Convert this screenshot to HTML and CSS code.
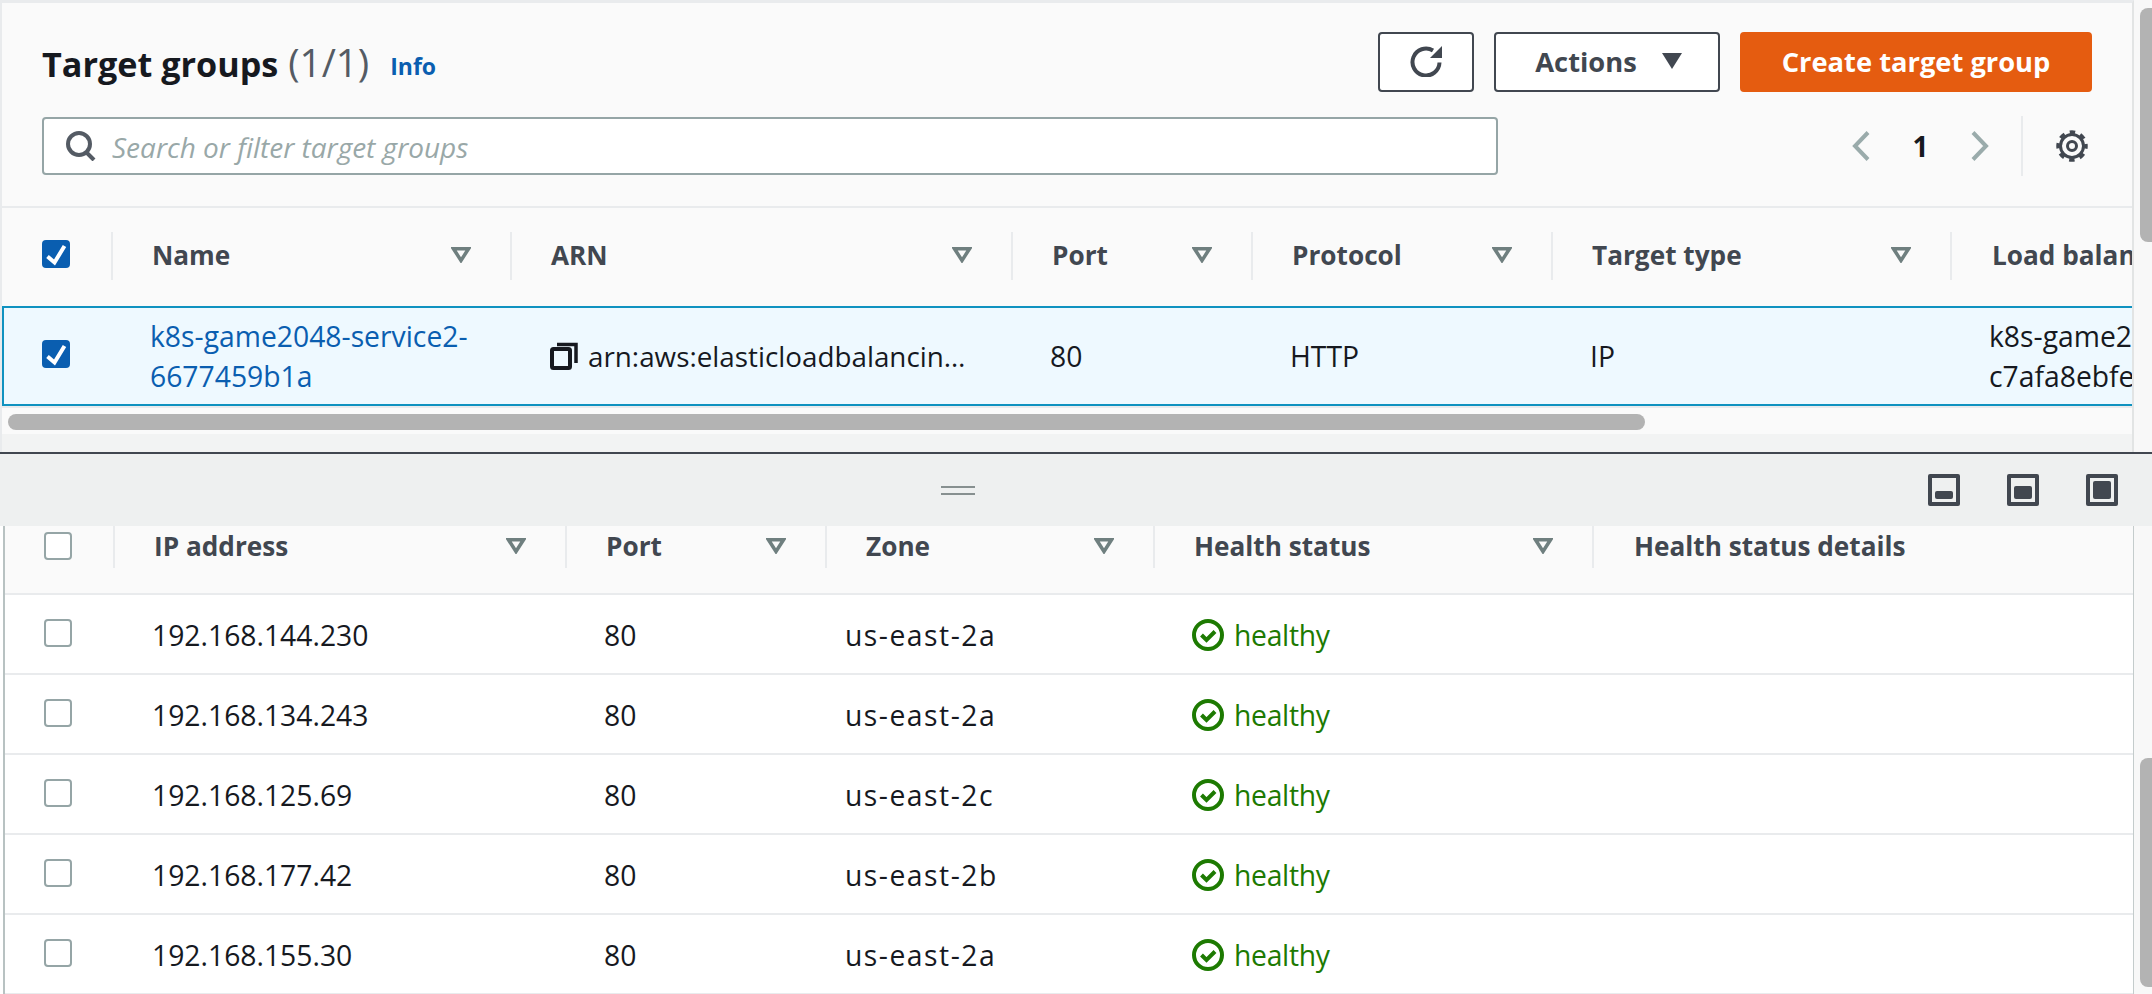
FILE: index.html
```html
<!DOCTYPE html>
<html lang="en">
<head>
    <meta charset="UTF-8">
    <title>Target groups</title>
    <link rel="stylesheet" href="styles.css">
</head>
<body>
    <svg class="sprite" width="0" height="0">
        <symbol id="caret" viewBox="0 0 20 16"><path d="M2.500 1.800h15L10 13.500z" fill="none" stroke="currentColor" stroke-width="3.500"/></symbol>
        <symbol id="check" viewBox="0 0 28 28"><path d="M5.500 16.500l7 6L22.500 6" fill="none" stroke="#fff" stroke-width="4"/></symbol>
        <symbol id="ok" viewBox="0 0 32 32"><circle cx="16" cy="16" r="14" fill="none" stroke="currentColor" stroke-width="4"/><path d="M9.500 16l5 5 8.500-8.500" fill="none" stroke="currentColor" stroke-width="4"/></symbol>
    </svg>

    <section class="top-pane">
        <div class="top-main">
            <header class="head">
                <div class="head-row">
                    <h1 class="title">Target groups <span class="count">(1/1)</span></h1>
                    <a class="info">Info</a>
                    <div class="actions">
                        <button class="btn btn-icon" aria-label="Refresh">
                            <svg width="32" height="32" viewBox="0 0 32 32"><path d="M29.500 17.500A13.500 13.500 0 1 1 23 5.500" fill="none" stroke="currentColor" stroke-width="4"/><path d="M32 1v12H20z" fill="currentColor"/></svg>
                        </button>
                        <button class="btn btn-actions">Actions
                            <svg width="20" height="16" viewBox="0 0 20 16"><path d="M0 0h20L10 16z" fill="currentColor"/></svg>
                        </button>
                        <button class="btn btn-primary">Create target group</button>
                    </div>
                </div>
                <div class="head-row search-row">
                    <label class="search">
                        <svg width="30" height="30" viewBox="0 0 30 30"><circle cx="13" cy="13" r="11" fill="none" stroke="currentColor" stroke-width="4"/><path d="M20 21l8 8" fill="none" stroke="currentColor" stroke-width="4"/></svg>
                        <input type="text" placeholder="Search or filter target groups">
                    </label>
                    <div class="pager">
                        <svg class="chev" width="18" height="30" viewBox="0 0 18 30"><path d="M16 1.500L3 15l13 13.500" fill="none" stroke="currentColor" stroke-width="4"/></svg>
                        <span class="page-num">1</span>
                        <svg class="chev" width="18" height="30" viewBox="0 0 18 30"><path d="M2 1.500L15 15 2 28.500" fill="none" stroke="currentColor" stroke-width="4"/></svg>
                        <span class="pager-sep"></span>
                        <svg class="gear" width="32" height="32" viewBox="0 0 32 32">
                            <circle cx="16" cy="16" r="11.500" fill="none" stroke="currentColor" stroke-width="3"/>
                            <circle cx="16" cy="16" r="14" fill="none" stroke="currentColor" stroke-width="3.500" stroke-dasharray="5.500 5.500" stroke-dashoffset="2.750"/>
                            <circle cx="16" cy="16" r="4.500" fill="none" stroke="currentColor" stroke-width="3"/>
                        </svg>
                    </div>
                </div>
            </header>

            <div class="tg-head">
                <div class="cb-cell"><span class="cb on"><svg width="28" height="28"><use href="#check"/></svg></span></div>
                <div class="th">Name<svg class="caret"><use href="#caret"/></svg></div>
                <div class="th">ARN<svg class="caret"><use href="#caret"/></svg></div>
                <div class="th">Port<svg class="caret"><use href="#caret"/></svg></div>
                <div class="th">Protocol<svg class="caret"><use href="#caret"/></svg></div>
                <div class="th">Target type<svg class="caret"><use href="#caret"/></svg></div>
                <div class="th">Load balancer</div>
            </div>
            <div class="tg-row">
                <div class="cb-cell"><span class="cb on"><svg width="28" height="28"><use href="#check"/></svg></span></div>
                <div class="td"><a class="link">k8s-game2048-service2-<br>6677459b1a</a></div>
                <div class="td arn">
                    <svg width="28" height="28" viewBox="0 0 28 28"><rect x="2" y="7" width="18" height="19" rx="1.500" fill="none" stroke="currentColor" stroke-width="4"/><path d="M7 2.500h19V21" fill="none" stroke="currentColor" stroke-width="3.500"/></svg>
                    <span>arn:aws:elasticloadbalancin…</span>
                </div>
                <div class="td">80</div>
                <div class="td">HTTP</div>
                <div class="td">IP</div>
                <div class="td">k8s-game2<br>c7afa8ebfe</div>
            </div>
            <div class="hscroll"><div class="hthumb"></div></div>
            <div class="gutter"></div>
        </div>
        <div class="vscroll"><div class="vthumb vthumb-top"></div></div>
    </section>

    <div class="split-bar">
        <div class="handle"></div>
        <div class="split-icons">
            <svg width="32" height="32" viewBox="0 0 32 32"><rect width="32" height="32" rx="2" fill="currentColor"/><rect x="4" y="4" width="24" height="24" fill="#eef0f0"/><rect x="7" y="17" width="18" height="8" rx="2" fill="currentColor"/></svg>
            <svg width="32" height="32" viewBox="0 0 32 32"><rect width="32" height="32" rx="2" fill="currentColor"/><rect x="4" y="4" width="24" height="24" fill="#eef0f0"/><rect x="7" y="12" width="18" height="13" rx="2" fill="currentColor"/></svg>
            <svg width="32" height="32" viewBox="0 0 32 32"><rect width="32" height="32" rx="2" fill="currentColor"/><rect x="4" y="4" width="24" height="24" fill="#eef0f0"/><rect x="7" y="7" width="18" height="18" rx="2" fill="currentColor"/></svg>
        </div>
    </div>

    <section class="bottom-pane">
        <div class="bottom-main">
            <div class="ip-head">
                <div class="cb-cell"><span class="cb"></span></div>
                <div class="th">IP address<svg class="caret"><use href="#caret"/></svg></div>
                <div class="th">Port<svg class="caret"><use href="#caret"/></svg></div>
                <div class="th">Zone<svg class="caret"><use href="#caret"/></svg></div>
                <div class="th">Health status<svg class="caret"><use href="#caret"/></svg></div>
                <div class="th">Health status details</div>
            </div>
            <div class="ip-row">
                <div class="cb-cell"><span class="cb"></span></div>
                <div class="td">192.168.144.230</div>
                <div class="td">80</div>
                <div class="td zone">us-east-2a</div>
                <div class="td healthy"><svg width="32" height="32"><use href="#ok"/></svg>healthy</div>
                <div class="td"></div>
            </div>
            <div class="ip-row">
                <div class="cb-cell"><span class="cb"></span></div>
                <div class="td">192.168.134.243</div>
                <div class="td">80</div>
                <div class="td zone">us-east-2a</div>
                <div class="td healthy"><svg width="32" height="32"><use href="#ok"/></svg>healthy</div>
                <div class="td"></div>
            </div>
            <div class="ip-row">
                <div class="cb-cell"><span class="cb"></span></div>
                <div class="td">192.168.125.69</div>
                <div class="td">80</div>
                <div class="td zone">us-east-2c</div>
                <div class="td healthy"><svg width="32" height="32"><use href="#ok"/></svg>healthy</div>
                <div class="td"></div>
            </div>
            <div class="ip-row">
                <div class="cb-cell"><span class="cb"></span></div>
                <div class="td">192.168.177.42</div>
                <div class="td">80</div>
                <div class="td zone">us-east-2b</div>
                <div class="td healthy"><svg width="32" height="32"><use href="#ok"/></svg>healthy</div>
                <div class="td"></div>
            </div>
            <div class="ip-row">
                <div class="cb-cell"><span class="cb"></span></div>
                <div class="td">192.168.155.30</div>
                <div class="td">80</div>
                <div class="td zone">us-east-2a</div>
                <div class="td healthy"><svg width="32" height="32"><use href="#ok"/></svg>healthy</div>
                <div class="td"></div>
            </div>
        </div>
        <div class="vscroll"><div class="vthumb vthumb-bottom"></div></div>
    </section>
</body>
</html>
```

FILE: styles.css
```css
* {
    box-sizing: border-box;
}

body {
    margin: 0;
    height: 994px;
    overflow: hidden;
    background-color: #fff;
    color: #16191f;
    font-family: "Open Sans", sans-serif;
    font-size: 28.300px;
}

.sprite {
    position: absolute;
}

/* top pane */
.top-pane {
    display: flex;
    height: 454px;
    background-color: #f8f8f8;
    border-bottom: 2px solid #414750;
}

.top-main {
    width: 2134px;
    overflow: hidden;
    background-color: #fafafa;
    border-top: 3px solid #e9ebed;
    border-left: 2px solid #e9ebed;
    border-right: 2px solid #e2e4e4;
}

.vscroll {
    flex: 1;
    padding-left: 6px;
    background-color: #f8f8f8;
}

.vthumb {
    background-color: #b3b3b3;
    border-radius: 8px 0 0 8px;
}

.vthumb-top {
    height: 234px;
    margin-top: 8px;
}

.vthumb-bottom {
    height: 229px;
    margin-top: 232px;
}

.head {
    height: 205px;
    padding: 29px 40px 0 40px;
    border-bottom: 2px solid #e9ebed;
}

.head-row {
    display: flex;
    align-items: center;
    height: 60px;
}

.search-row {
    height: 60px;
    margin-top: 24px;
}

.title {
    margin: 0;
    font-size: 34.200px;
    font-weight: 700;
}

.count {
    margin-left: 1px;
    font-size: 38.600px;
    font-weight: 400;
    color: #545b64;
}

.info {
    margin-left: 21px;
    margin-top: 8px;
    color: #0a5eb0;
    font-size: 23px;
    font-weight: 700;
}

.actions {
    display: flex;
    gap: 20px;
    margin-left: auto;
}

.btn {
    display: flex;
    align-items: center;
    justify-content: center;
    height: 60px;
    padding: 0 0 2px;
    background-color: #fff;
    border: 2px solid #414750;
    border-radius: 4px;
    color: #414750;
    font-family: inherit;
    font-size: 27.300px;
    font-weight: 700;
}

.btn-icon {
    width: 96px;
}

.btn-actions {
    width: 226px;
    gap: 25px;
    padding-left: 3px;
}

.btn-primary {
    width: 352px;
    background-color: #e55c10;
    border-color: #e55c10;
    color: #fff;
}

.search {
    display: flex;
    align-items: center;
    width: 1456px;
    height: 58px;
    padding-left: 22px;
    background-color: #fff;
    border: 2px solid #95a5a6;
    border-radius: 4px;
    color: #545b64;
}

.search input {
    flex: 1;
    margin: 2px 0 0 16px;
    padding: 0;
    border: 0;
    outline: 0;
    background: transparent;
    font-family: inherit;
    font-size: 28px;
    font-style: italic;
}

.search input::placeholder {
    color: #99a8a8;
    opacity: 1;
}

.pager {
    display: flex;
    align-items: center;
    margin-left: auto;
    margin-right: 4px;
}

.chev {
    color: #9aabab;
}

.page-num {
    width: 101px;
    text-align: center;
    font-size: 28px;
    font-weight: 700;
}

.pager-sep {
    width: 2px;
    height: 60px;
    margin: 0 33px 0 32px;
    background-color: #e9ebed;
}

.gear {
    color: #414750;
}

/* shared cells */
.cb-cell {
    display: flex;
    align-items: center;
    padding-left: 40px;
}

.cb {
    display: block;
    width: 28px;
    height: 28px;
    background-color: #fff;
    border: 2px solid #95a5a6;
    border-radius: 4px;
}

.cb svg {
    display: block;
}

.cb.on {
    background-color: #0a5eb0;
    border: 0;
}

.th {
    display: flex;
    align-items: center;
    justify-content: space-between;
    padding: 0 39px 2px 39px;
    border-left: 2px solid #e9ebed;
    color: #414750;
    font-size: 26.200px;
    font-weight: 700;
    white-space: nowrap;
}

.th:last-child {
    padding-left: 40px;
}

.caret {
    flex: none;
    width: 20px;
    height: 16px;
    color: #6f7f7f;
}

.td {
    display: flex;
    align-items: center;
    padding-left: 39px;
    white-space: nowrap;
}

/* target groups table */
.tg-head {
    display: grid;
    grid-template-columns: 109px 399px 501px 240px 300px 399px 1fr;
    align-items: start;
    height: 98px;
    padding-top: 24px;
}

.tg-head .th {
    height: 48px;
}

.tg-head .cb-cell {
    height: 44px;
}

.tg-row {
    display: grid;
    grid-template-columns: 107px 399px 501px 240px 300px 399px 1fr;
    height: 100px;
    line-height: 40px;
    background-color: #eef9ff;
    border: 2px solid #0f92c0;
    border-right: 0;
}

.tg-row .cb-cell {
    padding-left: 38px;
    padding-bottom: 4px;
}

.link {
    color: #0a5eb0;
}

.arn {
    font-size: 27.800px;
}

.arn svg {
    flex: none;
    margin: 0 10px 0 1px;
}

.hscroll {
    height: 28px;
    padding: 6px 0 0 6px;
    border-top: 2px solid #e9ebed;
}

.hthumb {
    width: 1637px;
    height: 16px;
    background-color: #b3b3b3;
    border-radius: 8px;
}

.gutter {
    height: 20px;
    background-color: #f2f3f3;
}

/* resize bar */
.split-bar {
    display: flex;
    align-items: center;
    height: 72px;
    padding: 0 34px 0 941px;
    background-color: #eef0f0;
}

.handle {
    width: 34px;
    height: 9px;
    border-top: 2px solid #879090;
    border-bottom: 2px solid #879090;
}

.split-icons {
    display: flex;
    gap: 47px;
    margin-left: auto;
    color: #414750;
}

/* targets table */
.bottom-pane {
    display: flex;
    height: 468px;
}

.bottom-main {
    width: 2134px;
    margin-left: 3px;
    overflow: hidden;
    border-left: 2px solid #b8c2c2;
    border-right: 4px solid #c4cccc;
}

.bottom-main + .vscroll {
    margin-left: -3px;
}

.ip-head {
    display: grid;
    grid-template-columns: 108px 452px 260px 328px 439px 1fr;
    align-items: start;
    height: 69px;
    background-color: #fafafa;
    border-bottom: 2px solid #e9ebed;
}

.ip-head .th {
    height: 42px;
}

.ip-head .cb-cell {
    height: 34px;
    padding-left: 39px;
    padding-top: 6px;
}

.ip-row {
    display: grid;
    grid-template-columns: 108px 452px 241px 347px 439px 1fr;
    height: 80px;
    border-bottom: 2px solid #e9ebed;
}

.ip-row .td {
    padding-top: 2px;
}

.ip-row .cb-cell {
    padding-left: 39px;
    padding-bottom: 2px;
}

.zone {
    letter-spacing: 1.500px;
}

.healthy {
    color: #1d7a02;
    letter-spacing: -0.300px;
}

.healthy svg {
    flex: none;
    margin-right: 10px;
}
```
